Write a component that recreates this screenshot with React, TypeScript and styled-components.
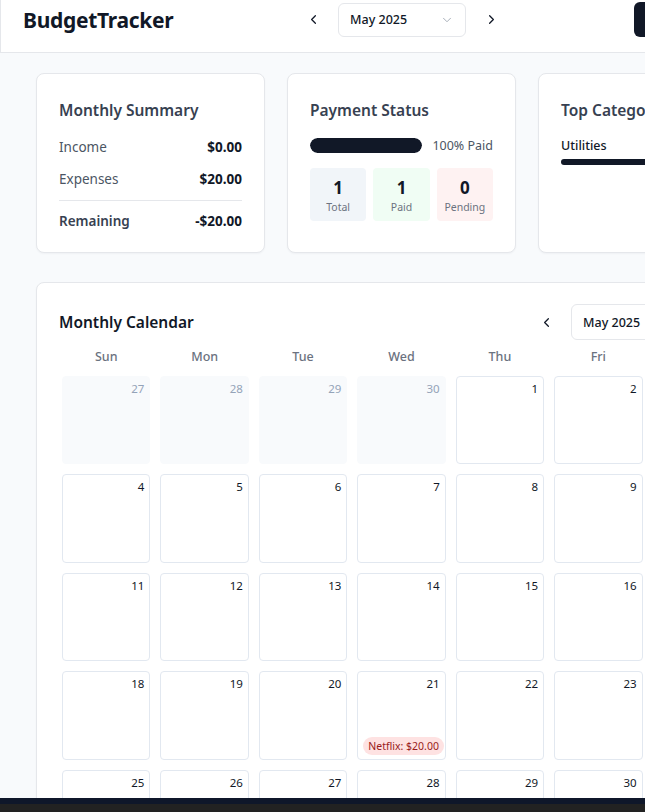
import React from "react";
import styled, { createGlobalStyle } from "styled-components";
import { ChevronLeft, ChevronRight, ChevronDown, Plus } from "lucide-react";

const GlobalStyle = createGlobalStyle`
  html, body {
    margin: 0;
    padding: 0;
    overflow: hidden;
    background: #f8fafc;
    font-family: "Noto Sans", "Open Sans", sans-serif;
    color: #111827;
  }
  * { box-sizing: border-box; }
`;

const Page = styled.div`
  width: 803px;
  min-height: 812px;
  background: #f8fafc;
`;

const Header = styled.header`
  display: grid;
  grid-template-columns: 1fr auto 1fr;
  align-items: center;
  height: 53px;
  padding: 2px 22px 16px;
  background: #ffffff;
  border-bottom: 1px solid #e5e7eb;
  border-left: 1px solid #e5e7eb;
`;

const Brand = styled.h1`
  margin: 0;
  font-size: 21px;
  font-weight: 700;
  letter-spacing: -0.3px;
  color: #111827;
`;

const MonthNav = styled.div`
  display: flex;
  align-items: center;
  gap: 13px;
`;

const IconButton = styled.button`
  display: flex;
  align-items: center;
  justify-content: center;
  width: 24px;
  height: 32px;
  padding: 0;
  border: none;
  background: transparent;
  color: #111827;
  cursor: pointer;
`;

const Select = styled.div<{ $h?: number }>`
  display: flex;
  align-items: center;
  justify-content: space-between;
  width: 128px;
  height: ${(p) => p.$h ?? 34}px;
  padding: 0 11px 0 11px;
  border: 1px solid #e5e7eb;
  border-radius: 6px;
  background: #ffffff;
  font-size: 12.5px;
  font-weight: 500;
  color: #111827;
`;

const PrimaryButton = styled.button`
  justify-self: end;
  display: flex;
  align-items: center;
  gap: 6px;
  width: 147px;
  height: 35px;
  padding: 0 14px;
  border: none;
  border-radius: 6px;
  background: #111827;
  color: #ffffff;
  font-family: inherit;
  font-size: 12.5px;
  font-weight: 500;
  white-space: nowrap;
`;

const Main = styled.main`
  padding: 20px 36px 0;
  display: flex;
  flex-direction: column;
  gap: 29px;
`;

const CardRow = styled.div`
  display: grid;
  grid-template-columns: repeat(3, minmax(0, 1fr));
  gap: 22px;
`;

const Card = styled.section`
  background: #ffffff;
  border: 1px solid #e5e7eb;
  border-radius: 8px;
  box-shadow: 0 1px 2px rgba(15, 23, 42, 0.04);
  padding: 24px 22px 22px;
  height: 180px;
`;

const CardTitle = styled.h2`
  margin: 0 0 15px;
  font-size: 15.5px;
  line-height: 24px;
  font-weight: 600;
  color: #374151;
`;

const SummaryRow = styled.div<{ $strong?: boolean }>`
  display: flex;
  justify-content: space-between;
  align-items: center;
  height: 20px;
  margin-bottom: 12px;
  font-size: 13.5px;
  color: ${(p) => (p.$strong ? "#374151" : "#4b5563")};
  font-weight: ${(p) => (p.$strong ? 600 : 400)};
`;

const Amount = styled.span`
  font-weight: 700;
  color: #111827;
`;

const Divider = styled.hr`
  margin: -1px 0 10px;
  border: none;
  border-top: 1px solid #e5e7eb;
`;

const ProgressRow = styled.div`
  display: flex;
  align-items: center;
  gap: 10px;
  height: 16px;
  margin-top: 13px;
  font-size: 12.5px;
  color: #4b5563;
`;

const ProgressTrack = styled.div`
  flex: 1;
  height: 15px;
  border-radius: 9999px;
  background: #e5e7eb;
  overflow: hidden;
`;

const ProgressFill = styled.div`
  height: 100%;
  border-radius: 9999px;
  background: #111827;
`;

const StatGrid = styled.div`
  display: grid;
  grid-template-columns: repeat(3, minmax(0, 1fr));
  gap: 7px;
  margin-top: 15px;
`;

const StatBox = styled.div<{ $bg: string }>`
  display: flex;
  flex-direction: column;
  align-items: center;
  justify-content: center;
  height: 53px;
  padding-top: 2px;
  border-radius: 4px;
  background: ${(p) => p.$bg};
`;

const StatValue = styled.div`
  font-size: 17px;
  line-height: 22px;
  font-weight: 700;
  color: #111827;
`;

const StatLabel = styled.div`
  font-size: 10.5px;
  line-height: 16px;
  color: #6b7280;
`;

const CategoryLabel = styled.div`
  margin-top: 12px;
  font-size: 12.5px;
  font-weight: 500;
  line-height: 18px;
  color: #111827;
`;

const CategoryBar = styled.div`
  height: 6px;
  margin-top: 4px;
  border-radius: 9999px;
  background: #111827;
`;

const CalendarCard = styled.section`
  background: #ffffff;
  border: 1px solid #e5e7eb;
  border-radius: 8px;
  box-shadow: 0 1px 2px rgba(15, 23, 42, 0.04);
  padding: 21px 22px 24px;
`;

const CalendarHeader = styled.div`
  display: flex;
  align-items: center;
  justify-content: space-between;
  height: 36px;
`;

const CalendarTitle = styled.h2`
  margin: 0;
  font-size: 15.5px;
  font-weight: 600;
  color: #111827;
`;

const CalendarNav = styled(MonthNav)`
  margin-right: 8px;
`;

const Grid = styled.div`
  display: grid;
  grid-template-columns: repeat(7, minmax(0, 1fr));
  column-gap: 10px;
  row-gap: 10px;
  padding: 0 3px;
`;

const WeekHeader = styled(Grid)`
  margin: 7px 0 9px;
`;

const DayName = styled.div`
  text-align: center;
  font-size: 12.5px;
  line-height: 20px;
  font-weight: 500;
  color: #6b7280;
`;

const DayCell = styled.div<{ $muted?: boolean }>`
  display: flex;
  flex-direction: column;
  justify-content: space-between;
  height: 88.4px;
  min-width: 0;
  padding: 4px 5px;
  border: 1px solid ${(p) => (p.$muted ? "#f8fafc" : "#e2e8f0")};
  border-radius: 4px;
  background: ${(p) => (p.$muted ? "#f8fafc" : "#ffffff")};
`;

const DayNumber = styled.div<{ $muted?: boolean }>`
  text-align: right;
  font-size: 11.5px;
  line-height: 16px;
  color: ${(p) => (p.$muted ? "#94a3b8" : "#111827")};
`;

const Badge = styled.div`
  align-self: flex-start;
  padding: 0 5px;
  height: 18px;
  line-height: 18px;
  border-radius: 9999px;
  background: #fee2e2;
  color: #991b1b;
  font-size: 10.5px;
  white-space: nowrap;
`;

const BottomBar = styled.div`
  position: fixed;
  left: 0;
  right: 0;
  bottom: 0;
  height: 14px;
  background: #222222;
  border-top: 6px solid #0f172a;
`;

type Day = { n: number; muted?: boolean; item?: string };

const days: Day[] = [
  { n: 27, muted: true },
  { n: 28, muted: true },
  { n: 29, muted: true },
  { n: 30, muted: true },
  ...Array.from({ length: 31 }, (_, i) => ({
    n: i + 1,
    item: i + 1 === 21 ? "Netflix: $20.00" : undefined,
  })),
];

const weekDays = ["Sun", "Mon", "Tue", "Wed", "Thu", "Fri", "Sat"];

export default function App() {
  return (
    <Page>
      <GlobalStyle />
      <Header>
        <Brand>BudgetTracker</Brand>
        <MonthNav>
          <IconButton aria-label="Previous month">
            <ChevronLeft size={15} strokeWidth={2} />
          </IconButton>
          <Select>
            <span>May 2025</span>
            <ChevronDown size={14} color="#9ca3af" strokeWidth={1.5} />
          </Select>
          <IconButton aria-label="Next month">
            <ChevronRight size={15} strokeWidth={2} />
          </IconButton>
        </MonthNav>
        <PrimaryButton>
          <Plus size={14} />
          Add Transaction
        </PrimaryButton>
      </Header>
      <Main>
        <CardRow>
          <Card>
            <CardTitle>Monthly Summary</CardTitle>
            <SummaryRow>
              <span>Income</span>
              <Amount>$0.00</Amount>
            </SummaryRow>
            <SummaryRow>
              <span>Expenses</span>
              <Amount>$20.00</Amount>
            </SummaryRow>
            <Divider />
            <SummaryRow $strong>
              <span>Remaining</span>
              <Amount>-$20.00</Amount>
            </SummaryRow>
          </Card>
          <Card>
            <CardTitle>Payment Status</CardTitle>
            <ProgressRow>
              <ProgressTrack>
                <ProgressFill style={{ width: "100%" }} />
              </ProgressTrack>
              <span>100% Paid</span>
            </ProgressRow>
            <StatGrid>
              <StatBox $bg="#f1f5f9">
                <StatValue>1</StatValue>
                <StatLabel>Total</StatLabel>
              </StatBox>
              <StatBox $bg="#f0fdf4">
                <StatValue>1</StatValue>
                <StatLabel>Paid</StatLabel>
              </StatBox>
              <StatBox $bg="#fef2f2">
                <StatValue>0</StatValue>
                <StatLabel>Pending</StatLabel>
              </StatBox>
            </StatGrid>
          </Card>
          <Card>
            <CardTitle>Top Categories</CardTitle>
            <CategoryLabel>Utilities</CategoryLabel>
            <CategoryBar />
          </Card>
        </CardRow>
        <CalendarCard>
          <CalendarHeader>
            <CalendarTitle>Monthly Calendar</CalendarTitle>
            <CalendarNav>
              <IconButton aria-label="Previous month">
                <ChevronLeft size={15} strokeWidth={2} />
              </IconButton>
              <Select $h={36}>
                <span>May 2025</span>
                <ChevronDown size={14} color="#9ca3af" strokeWidth={1.5} />
              </Select>
              <IconButton aria-label="Next month">
                <ChevronRight size={15} strokeWidth={2} />
              </IconButton>
            </CalendarNav>
          </CalendarHeader>
          <WeekHeader>
            {weekDays.map((d) => (
              <DayName key={d}>{d}</DayName>
            ))}
          </WeekHeader>
          <Grid>
            {days.map((d, i) => (
              <DayCell key={i} $muted={d.muted}>
                <DayNumber $muted={d.muted}>{d.n}</DayNumber>
                {d.item && <Badge>{d.item}</Badge>}
              </DayCell>
            ))}
          </Grid>
        </CalendarCard>
      </Main>
      <BottomBar />
    </Page>
  );
}
